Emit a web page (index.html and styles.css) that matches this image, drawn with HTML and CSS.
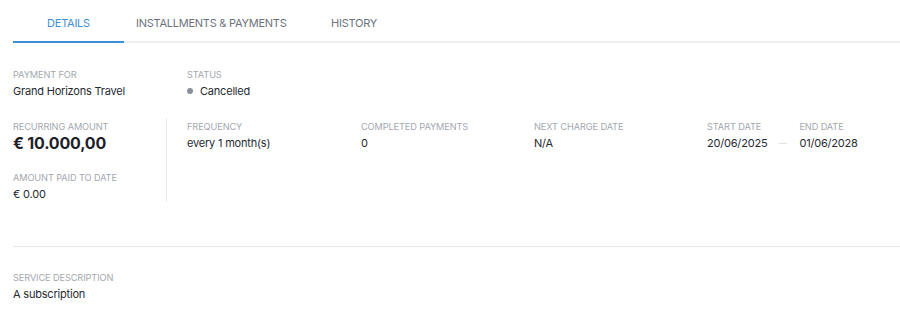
FILE: index.html
```html
<!DOCTYPE html>
<html>
<head>
<meta charset="utf-8">
<link rel="stylesheet" href="styles.css">
</head>
<body>
<div class="page">
  <nav class="tabs">
    <div class="tab active">DETAILS</div>
    <div class="tab">INSTALLMENTS &amp; PAYMENTS</div>
    <div class="tab">HISTORY</div>
  </nav>

  <section class="details">
    <div class="row top">
      <div class="field first">
        <div class="label">PAYMENT FOR</div>
        <div class="value">Grand Horizons Travel</div>
      </div>
      <div class="field col">
        <div class="label">STATUS</div>
        <div class="value status"><span class="dot"></span>Cancelled</div>
      </div>
    </div>

    <div class="row main">
      <div class="amounts">
        <div class="field">
          <div class="label">RECURRING AMOUNT</div>
          <div class="value big">€ 10.000,00</div>
        </div>
        <div class="field">
          <div class="label">AMOUNT PAID TO DATE</div>
          <div class="value">€ 0.00</div>
        </div>
      </div>
      <div class="field col wide">
        <div class="label">FREQUENCY</div>
        <div class="value">every 1 month(s)</div>
      </div>
      <div class="field col">
        <div class="label">COMPLETED PAYMENTS</div>
        <div class="value">0</div>
      </div>
      <div class="field col">
        <div class="label">NEXT CHARGE DATE</div>
        <div class="value">N/A</div>
      </div>
      <div class="dates">
        <div class="field">
          <div class="label">START DATE</div>
          <div class="value">20/06/2025</div>
        </div>
        <span class="sep"></span>
        <div class="field">
          <div class="label">END DATE</div>
          <div class="value">01/06/2028</div>
        </div>
      </div>
    </div>
  </section>

  <hr class="divider">

  <section class="desc">
    <div class="field">
      <div class="label">SERVICE DESCRIPTION</div>
      <div class="value">A subscription</div>
    </div>
  </section>
</div>
</body>
</html>
```

FILE: styles.css
```css
* { box-sizing: border-box; }
html, body { margin: 0; background: #fff; }
body {
  font-family: Inter, "Noto Sans", sans-serif;
  color: #2a2e35;
}
.page {
  padding-left: 13px;
}
.tabs {
  display: flex;
  border-bottom: 2px solid #eeeff1;
  height: 43px;
}
.tab {
  min-width: 111px;
  padding: 0 12px;
  text-align: center;
  font-size: 11px;
  letter-spacing: -0.25px;
  line-height: 46px;
  color: #6c727b;
  margin-bottom: -2px;
  border-bottom: 2px solid transparent;
}
.tab.active {
  color: #3d8fd9;
  border-bottom-color: #3d8fd9;
}
.details {
  padding-top: 25px;
}
.row { display: flex; }
.first { width: 174px; }
.col { width: 173px; }
.col.wide { width: 194px; padding-left: 20px; }
.field { display: flex; flex-direction: column; }
.label {
  font-size: 9.2px;
  letter-spacing: -0.1px;
  color: #a3a8af;
  line-height: 14px;
}
.value {
  font-size: 11px;
  letter-spacing: -0.2px;
  line-height: 18px;
  color: #262a31;
}
.value.big {
  font-size: 16px;
  font-weight: 700;
  letter-spacing: -0.2px;
  line-height: 18px;
  color: #1d2127;
}
.status { display: flex; align-items: center; }
.dot {
  width: 6px; height: 6px; border-radius: 50%;
  background: #8b9098;
  margin-right: 7px;
}
.main { margin-top: 20px; }
.amounts {
  width: 154px;
  border-right: 1px solid #e8e9eb;
  display: flex;
  flex-direction: column;
  gap: 19px;
  height: 84px;
  margin-top: -2px;
  padding-top: 2px;
}
.dates { display: flex; align-items: flex-start; }
.sep {
  display: block;
  width: 8px;
  height: 1px;
  background: #e2e3e6;
  margin: 23px 12px 0 12px;
}
.divider {
  border: 0;
  border-top: 1px solid #e6e7ea;
  margin: 44px 0 0 0;
}
.desc { padding-top: 24px; }
```
